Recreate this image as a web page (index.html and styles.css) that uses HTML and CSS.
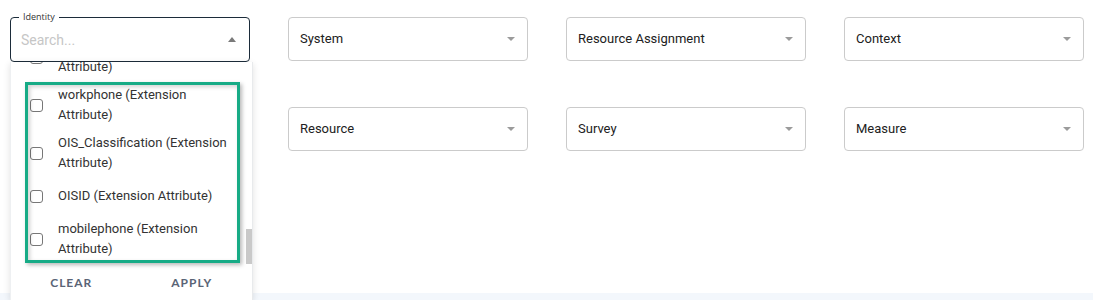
FILE: index.html
```html
<html>
<head>
  <title>Filters</title>
  <link rel="stylesheet" href="styles.css">
</head>
<body>
  <div class="page">
    <div class="filters">
      <div class="field field-open">
        <span class="field-label">Identity</span>
        <span class="placeholder">Search...</span>
        <span class="caret caret-up"></span>

        <div class="menu">
          <div class="menu-list">
            <div class="menu-items">
              <div class="item"><span class="check"></span><span class="item-text">homephone (Extension Attribute)</span></div>
              <div class="item"><span class="check"></span><span class="item-text">workphone (Extension Attribute)</span></div>
              <div class="item"><span class="check"></span><span class="item-text">OIS_Classification (Extension Attribute)</span></div>
              <div class="item"><span class="check"></span><span class="item-text">OISID (Extension Attribute)</span></div>
              <div class="item"><span class="check"></span><span class="item-text">mobilephone (Extension Attribute)</span></div>
            </div>
            <div class="scroll-thumb"></div>
          </div>
          <div class="menu-footer">
            <button class="menu-btn">CLEAR</button>
            <button class="menu-btn">APPLY</button>
          </div>
          <div class="highlight"></div>
        </div>
      </div>

      <div class="select"><span>System</span><span class="caret"></span></div>
      <div class="select"><span>Resource Assignment</span><span class="caret"></span></div>
      <div class="select"><span>Context</span><span class="caret"></span></div>

      <div class="spacer"></div>
      <div class="select"><span>Resource</span><span class="caret"></span></div>
      <div class="select"><span>Survey</span><span class="caret"></span></div>
      <div class="select"><span>Measure</span><span class="caret"></span></div>
    </div>
  </div>
</body>
</html>
```

FILE: styles.css
```css
body { margin: 0; background: #f3f7fc; font-family: Roboto, "Liberation Sans", sans-serif;
  color: #212121; overflow: hidden; }
.page { background: #fff; height: 293px; }
.filters { display: grid; grid-template-columns: repeat(4, 240px); column-gap: 38px;
  row-gap: 45px; padding: 17px 8px 0 10px; align-items: start; }

.select { height: 44px; box-sizing: border-box; border: 1px solid #cbcbcb; border-radius: 4px;
  display: flex; align-items: center; justify-content: space-between; padding: 0 12px 1px 11px;
  font-size: 13px; background: #fff; }
.caret { width: 0; height: 0; border-left: 4.5px solid transparent; border-right: 4.5px solid transparent;
  border-top: 4px solid #9b9b9b; }
.caret-up { border-top: none; border-bottom: 5px solid #7a7a7a; margin-right: 1px; }

/* identity search field, open */
.field { position: relative; height: 45px; box-sizing: border-box; border: 1px solid #1c2c3a;
  border-radius: 4px; display: flex; align-items: center; justify-content: space-between;
  padding: 0 12px 0 10px; background: #fff; }
.field-label { position: absolute; top: -7px; left: 8px; padding: 0 4px; background: #fff;
  font-family: "Open Sans", sans-serif; font-size: 9px; line-height: 12px; color: #333; }
.placeholder { font-size: 14px; color: #c6c6c6; }

.menu { position: absolute; top: 44px; left: -1px; width: 241px; background: #fff;
  box-shadow: 0 2px 7px rgba(0, 0, 0, 0.12); border-left: 1px solid #eef0f2; border-right: 1px solid #e8eaec;
  z-index: 5; }
.menu-list { height: 203px; overflow: hidden; position: relative; }
.menu-items { margin-top: -29px; }
.item { display: flex; align-items: center; box-sizing: border-box; min-height: 38px;
  padding: 4px 16px 4px 19px; }
.check { flex: none; width: 11px; height: 11px; border: 1px solid #777; border-radius: 3px; background: #fff; }
.item-text { margin-left: 15px; font-size: 13px; line-height: 20px; color: #333; }
.scroll-thumb { position: absolute; right: 0; top: 167px; width: 6px; height: 35px; background: #c9c9c9; }

.menu-footer { display: grid; grid-template-columns: 1fr 1fr; height: 35px; }
.menu-btn { border: none; background: none; font-family: Lato, sans-serif; font-weight: 700;
  font-size: 12px; letter-spacing: 1px; color: #5a6476; cursor: pointer; }

.highlight { position: absolute; left: 14px; top: 20px; width: 215px; height: 181px; box-sizing: border-box;
  border: 3px solid #17ab86;
  box-shadow: 2px 2px 4px rgba(0, 0, 0, 0.28), inset 2px 2px 4px rgba(0, 0, 0, 0.18); }
```
